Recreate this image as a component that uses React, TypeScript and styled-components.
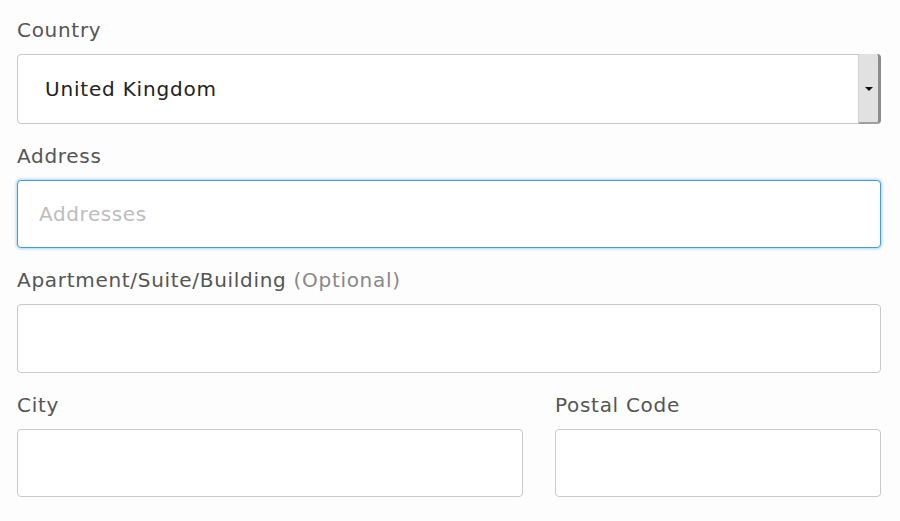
import styled, { createGlobalStyle } from "styled-components";

const GlobalStyle = createGlobalStyle`
  html, body {
    margin: 0;
    padding: 0;
    background: #fdfdfd;
  }
  body {
    font-family: "DejaVu Sans", "Liberation Sans", sans-serif;
  }
`;

const Form = styled.form`
  display: flex;
  flex-direction: column;
  gap: 20px;
  padding: 18px 19px 0 17px;
`;

const Row = styled.div`
  display: grid;
  grid-template-columns: 506fr 326fr;
  column-gap: 32px;
`;

const Field = styled.div`
  display: flex;
  flex-direction: column;
  gap: 12px;
`;

const Label = styled.label`
  display: block;
  height: 24px;
  line-height: 24px;
  font-size: 20px;
  letter-spacing: 0.7px;
  color: #555;
`;

const Hint = styled.span`
  color: #888;
`;

const Box = styled.div<{ $focused?: boolean; $height?: number }>`
  box-sizing: border-box;
  height: ${(p) => p.$height ?? 68}px;
  background: #fff;
  border-radius: 4px;
  border: 1px solid ${(p) => (p.$focused ? "#4b9bd3" : "#c9c9c9")};
  box-shadow: ${(p) => (p.$focused ? "0 0 3px 1px #a9d4f0" : "none")};
  display: flex;
  align-items: center;
`;

const Input = styled.input`
  flex: 1;
  min-width: 0;
  height: 100%;
  border: none;
  outline: none;
  background: transparent;
  padding: 0 21px;
  font-family: inherit;
  font-size: 20px;
  letter-spacing: 0.6px;
  color: #222;
  &::placeholder {
    color: #bdbdbd;
  }
`;

const SelectValue = styled.span`
  flex: 1;
  padding-left: 27px;
  font-size: 20px;
  letter-spacing: 0.8px;
  color: #222;
`;

const SpinButton = styled.span`
  align-self: stretch;
  width: 19px;
  margin: -1px -1px -1px 0;
  background: #e1e1e1;
  border-left: 1px solid #cfcfcf;
  border-right: 3px solid #8c8c8c;
  border-bottom: 2px solid #a0a0a0;
  border-radius: 0 4px 4px 0;
  display: flex;
  align-items: center;
  justify-content: center;
`;

const Arrow = styled.span`
  width: 0;
  height: 0;
  border-left: 4px solid transparent;
  border-right: 4px solid transparent;
  border-top: 4px solid #111;
  margin-top: 2px;
`;

export default function App() {
  return (
    <>
      <GlobalStyle />
      <Form onSubmit={(e) => e.preventDefault()}>
        <Field>
          <Label>Country</Label>
          <Box $height={70}>
            <SelectValue>United Kingdom</SelectValue>
            <SpinButton>
              <Arrow />
            </SpinButton>
          </Box>
        </Field>
        <Field>
          <Label>Address</Label>
          <Box $focused>
            <Input placeholder="Addresses" />
          </Box>
        </Field>
        <Field>
          <Label>
            Apartment/Suite/Building <Hint>(Optional)</Hint>
          </Label>
          <Box $height={69}>
            <Input />
          </Box>
        </Field>
        <Row>
          <Field>
            <Label>City</Label>
            <Box>
              <Input />
            </Box>
          </Field>
          <Field>
            <Label>Postal Code</Label>
            <Box>
              <Input />
            </Box>
          </Field>
        </Row>
      </Form>
    </>
  );
}
